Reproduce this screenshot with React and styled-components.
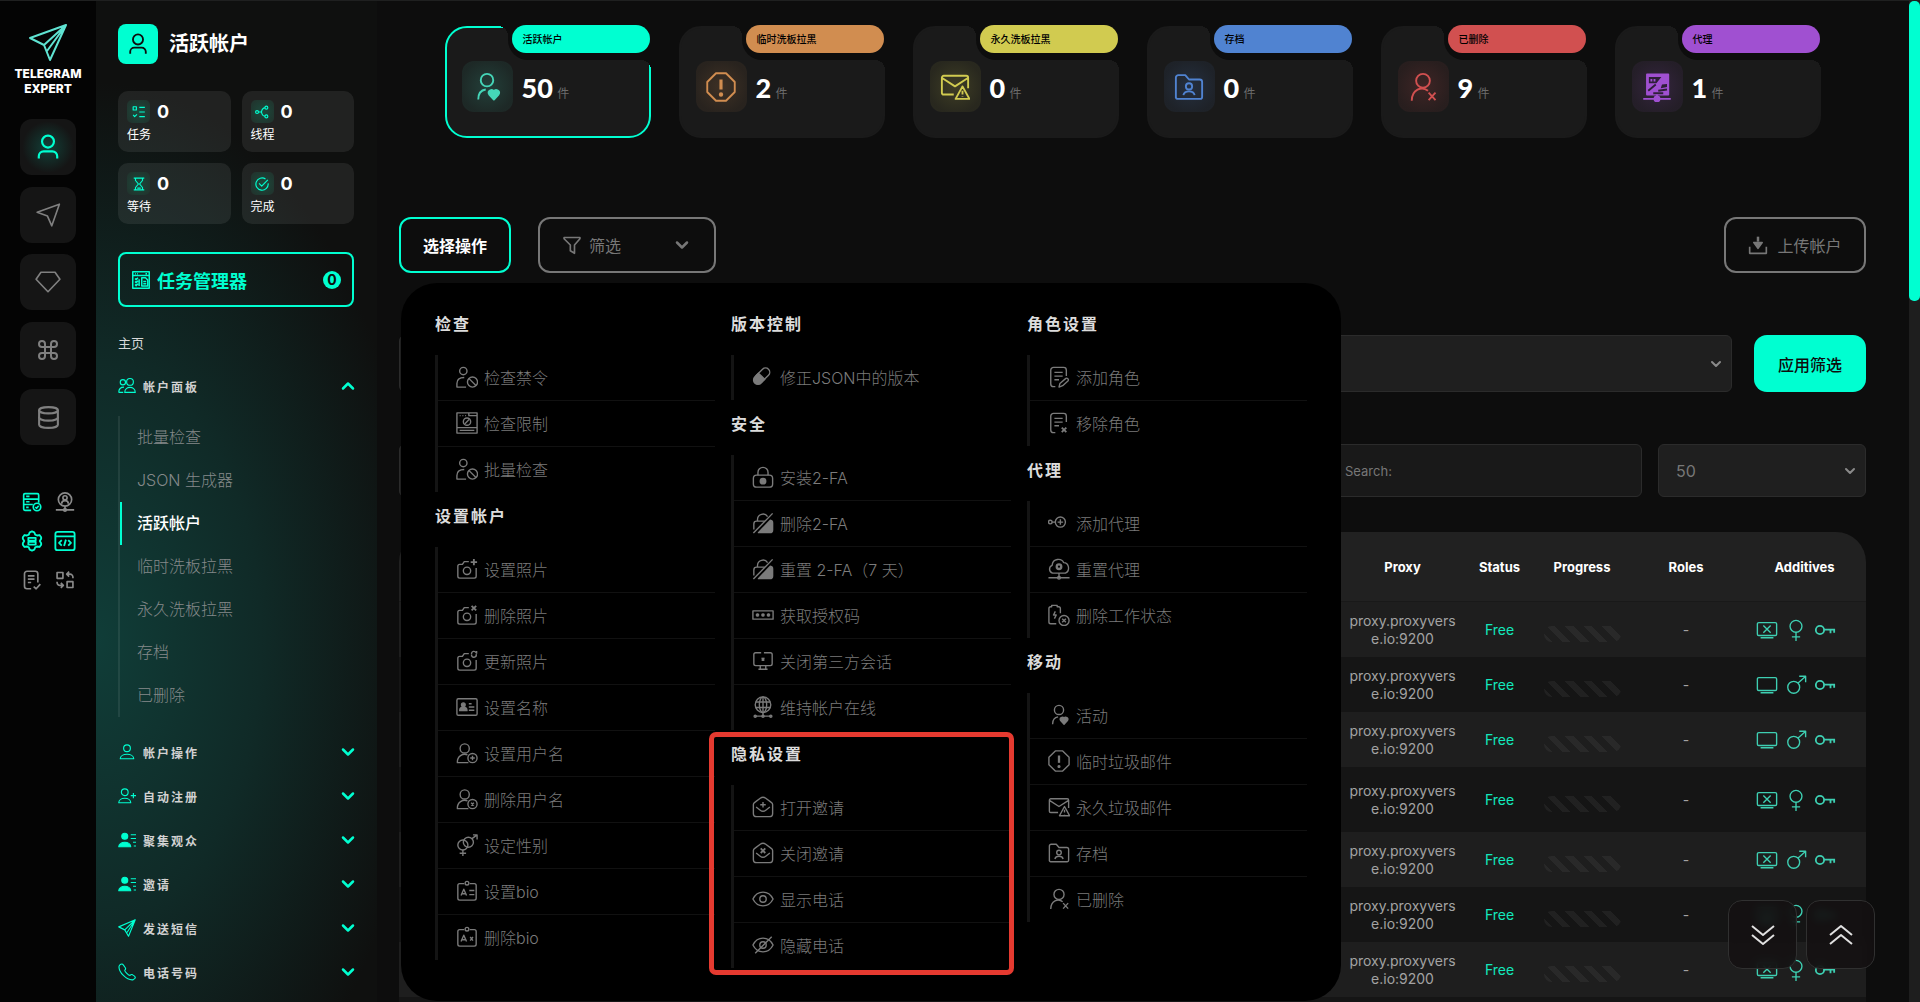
import styled, { createGlobalStyle, css } from "styled-components";
import { ChevronDown, ChevronUp, Command, Database } from "lucide-react";

const accent = "#00ffd1";
const page = "#0d0d0d";

const GlobalStyle = createGlobalStyle`
  * {
    box-sizing: border-box;
  }
  body {
    margin: 0;
    background: ${page};
    color: #fff;
    font-family: Inter, "Noto Sans CJK SC", sans-serif;
  }
  button, input, select {
    font-family: inherit;
  }
  button {
    padding: 0;
    border: 0;
    background: none;
    color: inherit;
    cursor: pointer;
  }
  ul {
    margin: 0;
    padding: 0;
    list-style: none;
  }
  a {
    color: inherit;
    text-decoration: none;
  }
`;

/**
 * Icon shapes, all on a 24 x 24 grid
 */
const person = (
  <>
    <circle cx="12" cy="7" r="5.5" />
    <path d="M3.5 22.5v-2a4.5 4.5 0 0 1 4.5-4.5h8a4.5 4.5 0 0 1 4.5 4.5v2" />
  </>
);

const camera = (
  <>
    <path d="M14 4H9L7 7H4a2 2 0 0 0-2 2v11a2 2 0 0 0 2 2h16a2 2 0 0 0 2-2v-9" />
    <circle cx="12" cy="14" r="4" />
  </>
);

const envelopeOpen = (
  <path d="M9 2.5 3 7a3 3 0 0 0-1.500 3v9a3.500 3.500 0 0 0 3.500 3.500h14a3.500 3.500 0 0 0 3.500-3.500v-9A3 3 0 0 0 21 7l-6-4.500a5 5 0 0 0-6 0ZM4.500 12l4.500 3.500a5 5 0 0 0 6 0l4.500-3.500" />
);

const lockSlashed = (
  <>
    <path d="M6 9.500V8a6 6 0 0 1 11-3M2 19v-6a3 3 0 0 1 3-3h9" />
    <path d="M20 9a3 3 0 0 1 2.500 3v7.500a3 3 0 0 1-3 3H7Z" fill="currentColor" />
    <path d="M1.500 23 22.500 1.500" />
  </>
);

const badge = (
  <>
    <path d="M9 4H4a2 2 0 0 0-2 2v14a2 2 0 0 0 2 2h16a2 2 0 0 0 2-2V6a2 2 0 0 0-2-2h-5" />
    <circle cx="12" cy="3.5" r="2" />
    <path d="m5.500 17 3-7 3 7M6.500 15h4" />
  </>
);

const doc = <path d="M8 22.500H6a3 3 0 0 1-3-3v-15a3 3 0 0 1 3-3h11a3 3 0 0 1 3 3V11M7 7h9M7 11h9M7 15h5" />;

const userLow = (
  <>
    <circle cx="9.5" cy="7" r="5" />
    <path d="M13.500 22.500H1.500v-1a8 8 0 0 1 11-7.500" />
  </>
);

const screen = <path d="M3 4h18a1.500 1.500 0 0 1 1.500 1.500v11A1.500 1.500 0 0 1 21 18H3a1.500 1.500 0 0 1-1.500-1.500v-11A1.500 1.500 0 0 1 3 4ZM5 20.500h14" />;

const shapes = {
  person,
  send: <path d="M22.500 2 15.500 22 11.500 13 2 9.500Z" />,
  diamond: <path d="M5.500 3h13L23 9.500 12 21 1 9.500Z" />,
  serverCheck: (
    <>
      <path d="M11 22H3.500A1.500 1.500 0 0 1 2 20.500v-17A1.500 1.500 0 0 1 3.500 2h15A1.500 1.500 0 0 1 20 3.500V13M2 8.500h18M2 15h11M5 5.200h4M5 11.700h4M5 18.500h3" />
      <circle cx="18" cy="18" r="4.5" />
      <path d="m16 18 1.500 1.500 2.500-3" />
    </>
  ),
  userPin: (
    <>
      <circle cx="12" cy="9" r="8" />
      <circle cx="12" cy="7" r="2.5" />
      <path d="M8 14c0-5 8-5 8 0M12 17v3M1 21.500h22" />
      <circle cx="12" cy="21.5" r="1.5" />
    </>
  ),
  gear: (
    <>
      <path d="M12 1.500 14.500 2.500 15.500 5l2 1 2.700-.5 1.800 2.500v1.500L20.500 12l1.500 2.500V16l-1.800 2.500-2.700-.5-2 1-1 2.500-2.500 1-2.500-1-1-2.500-2-1-2.700.5L2 16v-1.500L3.500 12 2 9.500V8l1.800-2.500L6.500 6l2-1 1-2.500Z" />
      <path d="M8 8.500h8v3H8ZM8 13h8v3H8Z" />
    </>
  ),
  code: (
    <>
      <rect x="1.500" y="2" width="21" height="20" rx="2.500" />
      <path d="M1.500 7h21M8.500 11 5.500 14l3 3M15.500 11l3 3-3 3M13 10.500l-2 7" />
    </>
  ),
  docCheck: <path d="M11 22.500H6a3 3 0 0 1-3-3v-15a3 3 0 0 1 3-3h10a3 3 0 0 1 3 3V15M7 7h8M7 11h8M7 15h4M14 20l3 2.500 5-5.500" />,
  swap: <path d="M2.500 3h7v7h-7ZM14.500 14h7v7h-7ZM14 5h4a3.500 3.500 0 0 1 3.500 3.500V10M17 2l-3 3 3 3M10 18.500H6A3.500 3.500 0 0 1 2.500 15v-1M7 15.500l3 3-3 3" />,
  checklist: <path d="M2 3h5.500v5.500H2ZM2 17l2.500 3L8.500 16M12.500 4H22M12.500 12H22M12.500 20H22" />,
  branch: (
    <>
      <circle cx="3.5" cy="12" r="2.5" />
      <circle cx="19.5" cy="4.5" r="2.5" />
      <circle cx="19.5" cy="19.5" r="2.5" />
      <path d="M6 12h5M17 5c-4 0-5 2-6 7 1 5 2 7 6 7" />
    </>
  ),
  hourglass: <path d="M3 2h18M3 22h18M6 2v4l5 6-5 6v4M18 2v4l-5 6 5 6v4M9 19h6" />,
  done: <path d="M18 3.500A10.500 10.500 0 1 0 22.500 11M7 11l4.500 4.500L22 5" />,
  taskWindow: (
    <>
      <path d="M1 1h22v22H1ZM1 6h22M4 3.500h1M7 3.500h1M18 3.500h2" />
      <path d="M13 9h5l3 3v8h-8ZM15 14h4M15 17h4M4 10l1.500 1.500L8 9M4 14l1.500 1.500L8 13M4 18l1.500 1.500L8 17M9.500 11v9" />
    </>
  ),
  users: (
    <>
      <circle cx="6.5" cy="7" r="3.5" />
      <circle cx="16" cy="6.5" r="4.5" />
      <path d="M9 20.500c0-9 14-9 14 0ZM1 20.500c0-5 2-7 7-7M1 20.500h6" />
    </>
  ),
  userSmall: (
    <>
      <circle cx="12" cy="7" r="4.5" />
      <path d="M3 21c0-8 18-8 18 0Z" />
    </>
  ),
  userPlus: (
    <>
      <circle cx="9" cy="7" r="4.5" />
      <path d="M1 21c0-8 16-8 16 0ZM20.500 8v7M17 11.500h7" />
    </>
  ),
  userList: (
    <>
      <circle cx="9" cy="7" r="4" fill="currentColor" />
      <path d="M1 21c0-8 16-8 16 0Z" fill="currentColor" />
      <path d="M17 5h7M17 10h7M20 15h4M21 20h3" />
    </>
  ),
  plane: <path d="M23 1 1 10.500l8 4L14 23ZM23 1 9 14.500M23 1 12 18" />,
  phone: <path d="M3 2 1.500 4C0 12 12 23.500 20 22.500l2.500-2c1-1 .5-2-.5-3l-3-2c-1-.5-2 0-3 1-2 0-7-5-7-7 1.500-1 1.500-2 .5-3.500L7 2.500C6 1 4.500 1 3 2Z" />,
  personHeart: (
    <>
      <circle cx="12" cy="6.5" r="5" />
      <path d="M5 22c0-4.500 2-7.500 6-8" />
      <path d="M17.500 22 13.800 18a2.200 2.200 0 0 1 3.700-2.500A2.200 2.200 0 0 1 21.200 18Z" fill="currentColor" />
    </>
  ),
  octagon: (
    <>
      <path d="M8 1h8l7 7v8l-7 7H8l-7-7V8Z" />
      <path d="M12 6v8" strokeWidth="2.5" />
      <circle cx="12" cy="18" r="1" fill="currentColor" />
    </>
  ),
  mailWarn: (
    <>
      <path d="M11 18H3a1.500 1.500 0 0 1-1.500-1.500v-12A1.500 1.500 0 0 1 3 3h18a1.500 1.500 0 0 1 1.500 1.500V13M2 5l10 6.500L22 5" />
      <path d="M18 11.500 12.500 21.500h11ZM18 15v3M18 19.500v.5" />
    </>
  ),
  folderUser: (
    <>
      <path d="M1.500 20.500v-16A2 2 0 0 1 3.500 2.500H9l3 3.500h8.500a2 2 0 0 1 2 2v12a1.500 1.500 0 0 1-1.500 1.500H3a1.500 1.500 0 0 1-1.500-1Z" />
      <circle cx="12" cy="11.5" r="2.5" />
      <path d="M7.500 18.500c1-4 8-4 9 0" />
    </>
  ),
  personX: (
    <>
      <circle cx="12" cy="7" r="5.5" />
      <path d="M3 23c0-9 8-12 13-8M16.500 16.500l5.500 6M22 16.500l-5.500 6" />
    </>
  ),
  proxyServer: (
    <>
      <path d="M4 2h17v16H4Z" fill="currentColor" />
      <path d="M5.500 4h10l-4 5h-6ZM16 10l4-.5V12l-5 1Z" fill="#2e1f38" stroke="none" />
      <path d="M7.500 5.500v2M10 5.500v2" />
      <path d="M5 15l6-5M13 15l7-1M9 17h8" stroke="#2e1f38" />
      <path d="M12 18v3M1 21.500h22" />
      <circle cx="12" cy="21.5" r="2" fill="currentColor" />
    </>
  ),
  ban: (
    <>
      <circle cx="8" cy="5.5" r="4" />
      <path d="M11 23H1v-4c0-4 3-6.500 8-6.500" />
      <circle cx="18" cy="17.5" r="5.5" />
      <path d="m14 13.500 8 8" />
    </>
  ),
  banWindow: (
    <>
      <path d="M1 1h22v22H1ZM1 17h22M4 4h1M7 4h1M10 4h1M14 1v3h9M4 20h16" />
      <circle cx="12" cy="10.5" r="4" />
      <path d="m9.500 13 5-5" />
    </>
  ),
  cameraPlus: <>{camera}<path d="M19.500 1v7M16 4.500h7" strokeWidth="2" /></>,
  cameraX: <>{camera}<path d="m17 2 5 5M22 2l-5 5" strokeWidth="2" /></>,
  cameraSync: <>{camera}<path d="M17 4.500a2.500 2.500 0 0 1 5-1M22 4.500a2.500 2.500 0 0 1-5 1.500M22.500 1v3M17 7V5" /></>,
  idCard: (
    <>
      <rect x="1" y="3" width="22" height="18" rx="1.500" />
      <circle cx="8" cy="9.5" r="2" fill="currentColor" />
      <path d="M4 16c0-5 8-5 8 0Z" fill="currentColor" />
      <path d="M14 8.500h3M14 12h6M14 15.500h6" />
    </>
  ),
  userAdd: <>{userLow}<circle cx="18" cy="17.5" r="5" /><path d="M18 15v5M15.500 17.500h5" /></>,
  userDel: <>{userLow}<circle cx="18" cy="17.5" r="5" /><path d="m16.500 16 3 3M19.500 16l-3 3" /></>,
  genders: (
    <>
      <circle cx="7.5" cy="12" r="5.5" />
      <circle cx="13.5" cy="9" r="5.5" />
      <path d="M7.500 17.500V24M4 21h7M17.500 5 23 1M18.500 1H23v5" />
    </>
  ),
  bioSet: <>{badge}<path d="M14.500 11.500H20M14.500 16H20" /></>,
  bioDel: <>{badge}<path d="m15.500 12 3 4M18.500 12l-3 4" /></>,
  pill: (
    <>
      <path d="m4 11 7.500-7.500a4.500 4.500 0 0 1 6.500 6.500L10.500 17.500" />
      <path d="m7 8 7 6.500-4 4a4.500 4.500 0 0 1-7-6.500Z" fill="currentColor" />
    </>
  ),
  lock: (
    <>
      <path d="M6.500 10V7a5.500 5.500 0 0 1 11 0v3" />
      <rect x="1.500" y="10" width="21" height="13" rx="3.500" />
      <circle cx="12" cy="16.5" r="3" fill="currentColor" />
    </>
  ),
  lockSlashed,
  pin: <path d="M1 7.500h22v9H1ZM6 10v4M4.300 11l3.400 2M7.700 11l-3.400 2M12 10v4M10.300 11l3.400 2M13.700 11l-3.400 2M18 10v4M16.300 11l3.400 2M19.700 11l-3.400 2" />,
  screenX: <path d="M10 3H4a2 2 0 0 0-2 2v10a2 2 0 0 0 2 2h16a2 2 0 0 0 2-2V5a2 2 0 0 0-2-2h-7M9 17v4M15 17v4M7 21h10M10.500 8.500l3 3M13.500 8.500l-3 3" />,
  globe: (
    <>
      <circle cx="12" cy="9.5" r="8.5" />
      <ellipse cx="12" cy="9.5" rx="4" ry="8.5" />
      <path d="M12 1v20M4 6.500h16M4 12.500h16M3 22h18" />
      <circle cx="3.5" cy="22" r="1.2" />
      <circle cx="12" cy="22" r="1.2" />
      <circle cx="20.5" cy="22" r="1.2" />
    </>
  ),
  inviteOn: <>{envelopeOpen}<path d="M12 6.500v6M9 9.500h6" /></>,
  inviteOff: <>{envelopeOpen}<path d="m9.500 7 5 5M14.500 7l-5 5" strokeWidth="2" /></>,
  eye: (
    <>
      <path d="M1 12c5-10 17-10 22 0-5 10-17 10-22 0Z" />
      <circle cx="12" cy="12" r="3.5" />
    </>
  ),
  eyeOff: (
    <>
      <path d="M1 12c5-10 17-10 22 0-5 10-17 10-22 0ZM3.500 21 21.500 3" />
      <circle cx="12" cy="12" r="3.5" />
    </>
  ),
  docEdit: <>{doc}<path d="m12 23 1-4 6.500-5.500c1.500-1 3.500 1 2.500 2.500L16 21.500Z" /></>,
  docX: <>{doc}<path d="m15 17 5 5M20 17l-5 5" strokeWidth="2" /></>,
  proxyAdd: (
    <>
      <circle cx="2.5" cy="11" r="2" />
      <circle cx="13.5" cy="11" r="5.5" />
      <path d="M4.500 11H8M13.500 8v6M10.500 11h6" />
    </>
  ),
  proxyReset: (
    <>
      <path d="M5 16.500a4.500 4.500 0 0 1-.5-8.500C5 0 15 0 17 5c6 0 7.500 9 2 11.500ZM12 16.500V20M.500 21.500h23" />
      <circle cx="12" cy="9.5" r="2.5" strokeWidth="2.5" />
      <circle cx="12" cy="21.5" r="1.5" />
    </>
  ),
  workDel: (
    <>
      <path d="M9 21.500H3a2 2 0 0 1-2-2V5a2 2 0 0 1 2-2h1V1.500h6V3h1.500a2 2 0 0 1 2 2v5M8 8l-2 4h3l-2 4" />
      <circle cx="17.5" cy="18" r="5.5" />
      <path d="m15.500 16 4 4M19.500 16l-4 4" />
    </>
  ),
  funnel: <path d="M2.500 3h19v1.500L15 12v10l-5-3v-7L2.500 4.500Z" />,
  upload: (
    <>
      <path d="M2 14v8h20v-8" />
      <path d="M12 2v6" strokeWidth="3" />
      <path d="M7 9h10l-5 7Z" fill="currentColor" />
    </>
  ),
  screen,
  screenOff: <>{screen}<path d="m8 7 8 8M16 7l-8 8" /></>,
  female: (
    <>
      <circle cx="12" cy="8" r="6.5" />
      <path d="M12 14.500V24M7.500 19.500h9" />
    </>
  ),
  male: (
    <>
      <circle cx="9.5" cy="14.5" r="6.5" />
      <path d="m14 10 8-7M15.500 2.500H22.500V9" />
    </>
  ),
  key: (
    <>
      <circle cx="6.5" cy="12" r="4.500" strokeWidth="2" />
      <path d="M11 11.500h12M18 11.500v4M22 11.500v3.500" strokeWidth="2" />
    </>
  ),
  chevronsDown: <path d="m1 3 11 9L23 3M1 12l11 9 11-9" />,
  chevronsUp: <path d="m1 12 11-9 11 9M1 21l11-9 11 9" />,
};

function Icon({ name, size = 22, weight = 1.5 }) {
  return (
    <svg
      width={size}
      height={size}
      viewBox="0 0 24 24"
      fill="none"
      stroke="currentColor"
      strokeWidth={weight}
      strokeLinejoin="round"
      aria-hidden="true"
    >
      {shapes[name]}
    </svg>
  );
}

const stats = [
  { icon: "checklist", label: "任务" },
  { icon: "branch", label: "线程" },
  { icon: "hourglass", label: "等待" },
  { icon: "done", label: "完成" },
];

const accountPages = ["批量检查", "JSON 生成器", "活跃帐户", "临时洗板拉黑", "永久洗板拉黑", "存档", "已删除"];

const sections = [
  { icon: "userSmall", label: "帐户操作" },
  { icon: "userPlus", label: "自动注册" },
  { icon: "userList", label: "聚集观众" },
  { icon: "userList", label: "邀请" },
  { icon: "plane", label: "发送短信" },
  { icon: "phone", label: "电话号码" },
];

const cards = [
  { label: "活跃帐户", count: 50, color: "#00ffd1", ink: "#45d6b8", icon: "personHeart", active: true },
  { label: "临时洗板拉黑", count: 2, color: "#d18d50", icon: "octagon" },
  { label: "永久洗板拉黑", count: 0, color: "#d1cb50", icon: "mailWarn" },
  { label: "存档", count: 0, color: "#5083d1", icon: "folderUser" },
  { label: "已删除", count: 9, color: "#d15050", icon: "personX" },
  { label: "代理", count: 1, color: "#a050d1", icon: "proxyServer" },
];

const menu = [
  [
    {
      title: "检查",
      items: [["ban", "检查禁令"], ["banWindow", "检查限制"], ["ban", "批量检查"]],
    },
    {
      title: "设置帐户",
      items: [
        ["cameraPlus", "设置照片"],
        ["cameraX", "删除照片"],
        ["cameraSync", "更新照片"],
        ["idCard", "设置名称"],
        ["userAdd", "设置用户名"],
        ["userDel", "删除用户名"],
        ["genders", "设定性别"],
        ["bioSet", "设置bio"],
        ["bioDel", "删除bio"],
      ],
    },
  ],
  [
    { title: "版本控制", items: [["pill", "修正JSON中的版本"]] },
    {
      title: "安全",
      items: [
        ["lock", "安装2-FA"],
        ["lockSlashed", "删除2-FA"],
        ["lockSlashed", "重置 2-FA（7 天）"],
        ["pin", "获取授权码"],
        ["screenX", "关闭第三方会话"],
        ["globe", "维持帐户在线"],
      ],
    },
    {
      title: "隐私设置",
      marked: true,
      items: [["inviteOn", "打开邀请"], ["inviteOff", "关闭邀请"], ["eye", "显示电话"], ["eyeOff", "隐藏电话"]],
    },
  ],
  [
    { title: "角色设置", items: [["docEdit", "添加角色"], ["docX", "移除角色"]] },
    {
      title: "代理",
      items: [["proxyAdd", "添加代理"], ["proxyReset", "重置代理"], ["workDel", "删除工作状态"]],
    },
    {
      title: "移动",
      items: [
        ["personHeart", "活动"],
        ["octagon", "临时垃圾邮件"],
        ["mailWarn", "永久垃圾邮件"],
        ["folderUser", "存档"],
        ["personX", "已删除"],
      ],
    },
  ],
];

const rows = [
  { screen: "screenOff", gender: "female" },
  { screen: "screen", gender: "male" },
  { screen: "screen", gender: "male" },
  { screen: "screenOff", gender: "female", tall: true },
  { screen: "screenOff", gender: "male" },
  { screen: "screenOff", gender: "female" },
  { screen: "screenOff", gender: "female" },
];

function LeftRail() {
  return (
    <Rail>
      <Logo>
        <svg width="40" height="40" viewBox="0 0 40 40" fill="none" stroke="#5fe3d2" strokeWidth="2" strokeLinejoin="round" aria-hidden="true">
          <path d="M38 2 2 15l14 7 6 15ZM38 2 16 22M38 2 19 28" />
        </svg>
        <span>TELEGRAM</span>
        <span>EXPERT</span>
      </Logo>
      <RailButtons>
        <RailButton $active aria-label="帐户"><Icon name="person" size={26} weight={2} /></RailButton>
        <RailButton aria-label="发送"><Icon name="send" size={26} weight={1.5} /></RailButton>
        <RailButton aria-label="高级"><Icon name="diamond" size={26} weight={1.5} /></RailButton>
        <RailButton aria-label="命令"><Command size={24} strokeWidth={2} /></RailButton>
        <RailButton aria-label="数据"><Database size={25} strokeWidth={2} /></RailButton>
      </RailButtons>
      <Tools>
        <Tool $on aria-label="服务器"><Icon name="serverCheck" size={20} weight={2} /></Tool>
        <Tool aria-label="用户网络"><Icon name="userPin" size={20} weight={2} /></Tool>
        <Tool $on aria-label="设置"><Icon name="gear" size={22} weight={2} /></Tool>
        <Tool $on aria-label="代码"><Icon name="code" size={22} weight={2} /></Tool>
        <Tool aria-label="日志"><Icon name="docCheck" size={20} weight={2} /></Tool>
        <Tool aria-label="转换"><Icon name="swap" size={20} weight={2} /></Tool>
      </Tools>
    </Rail>
  );
}

function SideBar() {
  return (
    <Side>
      <SideTitle>
        <TitleIcon><Icon name="person" size={22} weight={2} /></TitleIcon>
        活跃帐户
      </SideTitle>
      <Stats>
        {stats.map((stat) => (
          <Stat key={stat.label}>
            <StatTop>
              <StatIcon><Icon name={stat.icon} size={14} weight={2} /></StatIcon>
              0
            </StatTop>
            {stat.label}
          </Stat>
        ))}
      </Stats>
      <TaskButton>
        <Icon name="taskWindow" size={18} weight={2} />
        任务管理器
        <TaskCount>0</TaskCount>
      </TaskButton>
      <HomeLabel>主页</HomeLabel>
      <nav>
        <Section>
          <Icon name="users" size={18} weight={1.5} />
          <span>帐户面板</span>
          <ChevronUp size={20} strokeWidth={3} />
        </Section>
        <SubList>
          {accountPages.map((label) => (
            <li key={label}>
              <SubLink href="#" $active={label === "活跃帐户"}>{label}</SubLink>
            </li>
          ))}
        </SubList>
        {sections.map((section) => (
          <Section key={section.label}>
            <Icon name={section.icon} size={18} weight={1.5} />
            <span>{section.label}</span>
            <ChevronDown size={20} strokeWidth={3} />
          </Section>
        ))}
      </nav>
    </Side>
  );
}

function StatusCards() {
  return (
    <Cards>
      {cards.map((card) => (
        <Card key={card.label} $active={card.active}>
          <Notch>
            <CardBadge $color={card.color}>{card.label}</CardBadge>
          </Notch>
          <CardIcon $color={card.ink || card.color}>
            <Icon name={card.icon} size={30} />
          </CardIcon>
          <CardCount>
            {card.count} <Unit>件</Unit>
          </CardCount>
        </Card>
      ))}
    </Cards>
  );
}

function ActionMenu() {
  return (
    <Menu>
      {menu.map((groups) => (
        <div key={groups[0].title}>
          {groups.map((group) => (
            <Group key={group.title} $marked={group.marked}>
              <GroupTitle>{group.title}</GroupTitle>
              <GroupList>
                {group.items.map(([icon, label]) => (
                  <li key={label}>
                    <MenuItem>
                      <Icon name={icon} />
                      {label}
                    </MenuItem>
                  </li>
                ))}
              </GroupList>
            </Group>
          ))}
        </div>
      ))}
    </Menu>
  );
}

function AccountTable() {
  return (
    <Table>
      <colgroup>
        <col />
        <col width="123" />
        <col width="71" />
        <col width="94" />
        <col width="114" />
        <col width="123" />
      </colgroup>
      <thead>
        <tr>
          <th></th>
          <th>Proxy</th>
          <th>Status</th>
          <th>Progress</th>
          <th>Roles</th>
          <th>Additives</th>
        </tr>
      </thead>
      <tbody>
        {rows.map((row, i) => (
          <Row key={i} $tall={row.tall}>
            <td></td>
            <td>
              proxy.proxyvers
              <br />
              e.io:9200
            </td>
            <Free>Free</Free>
            <td><Progress /></td>
            <td>-</td>
            <td>
              <Additives>
                <Icon name={row.screen} />
                <Icon name={row.gender} />
                <Icon name="key" />
              </Additives>
            </td>
          </Row>
        ))}
        <Row>
          <td colSpan="6"></td>
        </Row>
      </tbody>
    </Table>
  );
}

function App() {
  return (
    <>
      <GlobalStyle />
      <Layout>
        <LeftRail />
        <SideBar />
        <Main>
          <StatusCards />
          <Toolbar>
            <ActionButton>选择操作</ActionButton>
            <FilterButton>
              <Icon name="funnel" size={20} weight={2} />
              筛选
              <ChevronDown size={20} strokeWidth={3} />
            </FilterButton>
            <UploadButton>
              <Icon name="upload" size={20} weight={2} />
              上传帐户
            </UploadButton>
            <ActionMenu />
          </Toolbar>
          <FilterRow>
            <SelectBox>
              <select aria-label="角色"><option></option></select>
              <ChevronDown size={16} strokeWidth={3} />
            </SelectBox>
            <ApplyButton>应用筛选</ApplyButton>
          </FilterRow>
          <SearchRow>
            <SelectBox>
              <select aria-label="列"><option></option></select>
            </SelectBox>
            <Search type="search" aria-label="Search" placeholder="Search:" />
            <SelectBox $small>
              <select aria-label="每页"><option>50</option></select>
              <ChevronDown size={16} strokeWidth={3} />
            </SelectBox>
          </SearchRow>
          <AccountTable />
        </Main>
        <ScrollTrack>
          <ScrollThumb />
        </ScrollTrack>
        <Jump>
          <JumpButton aria-label="到底部"><Icon name="chevronsDown" size={24} weight={2} /></JumpButton>
          <JumpButton aria-label="到顶部"><Icon name="chevronsUp" size={24} weight={2} /></JumpButton>
        </Jump>
      </Layout>
    </>
  );
}

const Layout = styled.div`
  display: flex;
  height: 100vh;
  overflow: hidden;
  border-top: 1px solid #1f2020;
`;

const Rail = styled.aside`
  flex: 0 0 96px;
  display: flex;
  flex-direction: column;
  align-items: center;
  padding-top: 22px;
  background: #040404;
`;

const Logo = styled.div`
  display: flex;
  flex-direction: column;
  align-items: center;
  font-size: 12px;
  font-weight: 800;
  line-height: 15px;
  svg {
    margin-bottom: 3px;
  }
`;

const RailButtons = styled.div`
  display: flex;
  flex-direction: column;
  justify-content: space-between;
  height: 326px;
  margin-top: 23px;
`;

const RailButton = styled.button`
  display: grid;
  place-items: center;
  width: 56px;
  height: 56px;
  border-radius: 12px;
  background: #151515;
  color: #808080;
  ${(p) =>
    p.$active &&
    css`
      color: ${accent};
      background: radial-gradient(circle, #124038 0%, #151515 65%);
    `}
`;

const Tools = styled.div`
  display: grid;
  grid-template-columns: 22px 22px;
  grid-auto-rows: 22px;
  gap: 17px 11px;
  margin-top: 46px;
`;

const Tool = styled.button`
  display: grid;
  place-items: center;
  color: ${(p) => (p.$on ? accent : "#8a8a8a")};
`;

const Side = styled.aside`
  flex: 0 0 281px;
  padding: 23px 23px 0 22px;
  background: radial-gradient(ellipse 330px 560px at 0 64%, #103d38 0%, #102a27 50%, #0f100f 100%);
`;

const SideTitle = styled.h1`
  display: flex;
  align-items: center;
  gap: 11px;
  margin: 0;
  font-size: 20px;
  line-height: 40px;
`;

const TitleIcon = styled.span`
  display: grid;
  place-items: center;
  width: 40px;
  height: 40px;
  border-radius: 8px;
  background: ${accent};
  color: #0d0d0d;
`;

const Stats = styled.div`
  display: grid;
  grid-template-columns: 1fr 1fr;
  gap: 11px;
  margin-top: 27px;
`;

const Stat = styled.div`
  height: 61px;
  padding: 9px;
  border-radius: 10px;
  background: rgba(255, 255, 255, 0.08);
  font-size: 12px;
  line-height: 24px;
`;

const StatTop = styled.div`
  display: flex;
  align-items: center;
  gap: 7px;
  font-size: 18px;
  font-weight: 700;
  line-height: 23px;
`;

const StatIcon = styled.span`
  display: grid;
  place-items: center;
  width: 23px;
  height: 23px;
  border-radius: 5px;
  background: radial-gradient(circle, #1b4a3c, #22302b);
  color: ${accent};
`;

const TaskButton = styled.button`
  display: flex;
  align-items: center;
  gap: 7px;
  width: 100%;
  height: 55px;
  margin-top: 28px;
  padding: 0 11px 0 12px;
  border: 2px solid ${accent};
  border-radius: 8px;
  color: ${accent};
  font-size: 18px;
  font-weight: 700;
`;

const TaskCount = styled.span`
  width: 18px;
  margin-left: auto;
  border-radius: 9px;
  background: ${accent};
  color: #0d0d0d;
  font-size: 14px;
  line-height: 18px;
`;

const HomeLabel = styled.div`
  margin-top: 26px;
  color: #d8d8d8;
  font-size: 13px;
  line-height: 20px;
`;

const Section = styled.button`
  display: flex;
  align-items: center;
  gap: 7px;
  width: 100%;
  height: 44px;
  color: ${accent};
  span {
    flex: 1;
    color: #d2d2d2;
    font-size: 12px;
    font-weight: 700;
    letter-spacing: 2px;
    text-align: left;
  }
  svg:last-child {
    margin-right: -4px;
  }
  &:first-child {
    margin-top: 11px;
  }
`;

const SubList = styled.ul`
  margin: 8px 0 13px;
  border-left: 2px solid rgba(255, 255, 255, 0.08);
`;

const SubLink = styled.a`
  display: block;
  padding-left: 15px;
  border-left: 2px solid ${(p) => (p.$active ? accent : "transparent")};
  color: ${(p) => (p.$active ? "#fff" : "#85898a")};
  font-size: 16px;
  font-weight: ${(p) => (p.$active ? 500 : 300)};
  line-height: 43px;
`;

const Main = styled.main`
  flex: 1;
  min-width: 0;
  padding: 25px 43px 0 22px;
`;

const Cards = styled.div`
  display: flex;
  justify-content: center;
  gap: 28px;
`;

const Card = styled.section`
  position: relative;
  flex: 0 1 206px;
  display: flex;
  gap: 9px;
  height: 112px;
  padding: 33px 15px 0;
  border: 2px solid ${(p) => (p.$active ? accent : "#1a1a1a")};
  border-radius: 22px;
  background: #1a1a1a;
`;

/* page-coloured cut in the card's top right corner, holds the badge */
const Notch = styled.div`
  position: absolute;
  top: -3px;
  right: -2px;
  width: 143px;
  height: 35px;
  padding: 0 1px 0 4px;
  border-bottom-left-radius: 20px;
  background: ${page};
  &::before,
  &::after {
    content: "";
    position: absolute;
    width: 10px;
    height: 10px;
    background: radial-gradient(circle at 0 100%, transparent 10px, ${page} 10px);
  }
  &::before {
    top: 1px;
    left: -10px;
  }
  &::after {
    top: 35px;
    right: 0;
  }
`;

const CardBadge = styled.div`
  padding: 0 11px;
  border-radius: 14px;
  background: ${(p) => p.$color};
  color: #000;
  font-size: 10px;
  font-weight: 500;
  line-height: 28px;
`;

const CardIcon = styled.div`
  display: grid;
  place-items: center;
  width: 51px;
  height: 51px;
  border-radius: 12px;
  background: radial-gradient(circle, ${(p) => p.$color}33, ${(p) => p.$color}14 75%);
  color: ${(p) => p.$color};
`;

const CardCount = styled.div`
  font-family: Lato, "Noto Sans CJK SC", sans-serif;
  font-size: 27px;
  font-weight: 900;
  line-height: 53px;
`;

const Unit = styled.span`
  margin-left: -2px;
  color: #6c6c6c;
  font-size: 12px;
  font-weight: 400;
`;

const Toolbar = styled.div`
  position: relative;
  display: flex;
  gap: 27px;
  margin-top: 79px;
`;

const ActionButton = styled.button`
  width: 112px;
  height: 56px;
  border: 2px solid ${accent};
  border-radius: 12px;
  font-size: 16px;
  font-weight: 700;
`;

const FilterButton = styled.button`
  display: flex;
  align-items: center;
  gap: 7px;
  width: 178px;
  height: 56px;
  padding: 0 22px;
  border: 2px solid #777;
  border-radius: 12px;
  color: #777;
  font-size: 16px;
  svg:last-child {
    margin-left: auto;
  }
`;

const UploadButton = styled.button`
  display: flex;
  align-items: center;
  justify-content: center;
  gap: 9px;
  width: 142px;
  height: 56px;
  margin-left: auto;
  border: 2px solid #777;
  border-radius: 12px;
  color: #777;
  font-size: 16px;
`;

const Menu = styled.div`
  position: absolute;
  z-index: 2;
  top: 66px;
  left: 2px;
  display: grid;
  grid-template-columns: repeat(3, 280px);
  gap: 16px;
  padding: 17px 34px 33px;
  border-radius: 36px;
  background: #000;
`;

const Group = styled.section`
  position: relative;
  ${(p) =>
    p.$marked &&
    css`
      &::after {
        content: "";
        position: absolute;
        inset: 2px -3px -7px -22px;
        border: 5px solid #e53a30;
        border-radius: 7px;
        pointer-events: none;
      }
    `}
`;

const GroupTitle = styled.h2`
  height: 55px;
  margin: 0;
  color: #dcdcdc;
  font-size: 16px;
  font-weight: 700;
  letter-spacing: 2px;
  line-height: 48px;
`;

const GroupList = styled.ul`
  border-left: 3px solid #141414;
  li + li {
    border-top: 1px solid #111;
  }
`;

const MenuItem = styled.button`
  display: flex;
  align-items: center;
  gap: 6px;
  width: 100%;
  height: 45px;
  padding: 0 0 2px 18px;
  color: #7b7b7b;
  font-size: 16px;
  font-weight: 300;
`;

const FilterRow = styled.div`
  display: flex;
  gap: 22px;
  height: 57px;
  margin-top: 62px;
`;

const SelectBox = styled.div`
  position: relative;
  flex: ${(p) => (p.$small ? "0 0 208px" : "1")};
  select {
    width: 100%;
    height: 100%;
    padding: 0 17px;
    appearance: none;
    border: 1px solid #2b2b2b;
    border-radius: 6px;
    background: #1f1f1f;
    color: #777;
    font-size: 16px;
  }
  svg {
    position: absolute;
    top: 50%;
    right: 8px;
    margin-top: -8px;
    color: #8a8a8a;
    pointer-events: none;
  }
`;

const ApplyButton = styled.button`
  width: 112px;
  border-radius: 13px;
  background: ${accent};
  color: #0d0d0d;
  font-size: 16px;
  font-weight: 500;
`;

const SearchRow = styled.div`
  display: flex;
  gap: 16px;
  height: 53px;
  margin-top: 52px;
`;

const Search = styled.input`
  width: 318px;
  padding: 0 20px;
  border: 1px solid #2b2b2b;
  border-radius: 6px;
  background: #191919;
  color: #777;
  font-size: 13px;
  &::placeholder {
    color: #777;
  }
`;

const Table = styled.table`
  width: 100%;
  margin-top: 35px;
  table-layout: fixed;
  border-spacing: 0;
  overflow: hidden;
  border-radius: 30px 30px 0 0;
  color: #a3a3a3;
  font-size: 14px;
  line-height: 18px;
  text-align: center;
  th {
    height: 70px;
    padding: 0;
    border-bottom: 1px solid #191919;
    background: #212121;
    color: #fff;
    font-size: 13px;
  }
  td {
    padding: 0;
  }
`;

const Row = styled.tr`
  height: ${(p) => (p.$tall ? 65 : 55)}px;
  background: #151515;
  &:nth-child(odd) {
    background: #1e1e1e;
  }
`;

const Free = styled.td`
  color: #12e8bd;
`;

const Progress = styled.div`
  width: 77px;
  height: 16px;
  margin: 8px auto 0;
  border-radius: 8px;
  background: repeating-linear-gradient(45deg, rgba(255, 255, 255, 0.05) 0 6px, transparent 6px 13px);
`;

const Additives = styled.div`
  display: flex;
  justify-content: center;
  gap: 7px;
  padding-right: 18px;
  color: #3ecfb2;
`;

const ScrollTrack = styled.div`
  flex: 0 0 11px;
  background: #1e1e1e;
`;

const ScrollThumb = styled.div`
  height: 30%;
  border-radius: 5px;
  background: ${accent};
`;

const Jump = styled.div`
  position: fixed;
  z-index: 3;
  right: 45px;
  bottom: 33px;
  display: flex;
  gap: 9px;
`;

const JumpButton = styled.button`
  display: grid;
  place-items: center;
  width: 69px;
  height: 69px;
  border: 1px solid #303030;
  border-radius: 14px;
  background: rgba(20, 17, 18, 0.85);
  backdrop-filter: blur(4px);
  color: #e0e0e0;
`;

export default App;
